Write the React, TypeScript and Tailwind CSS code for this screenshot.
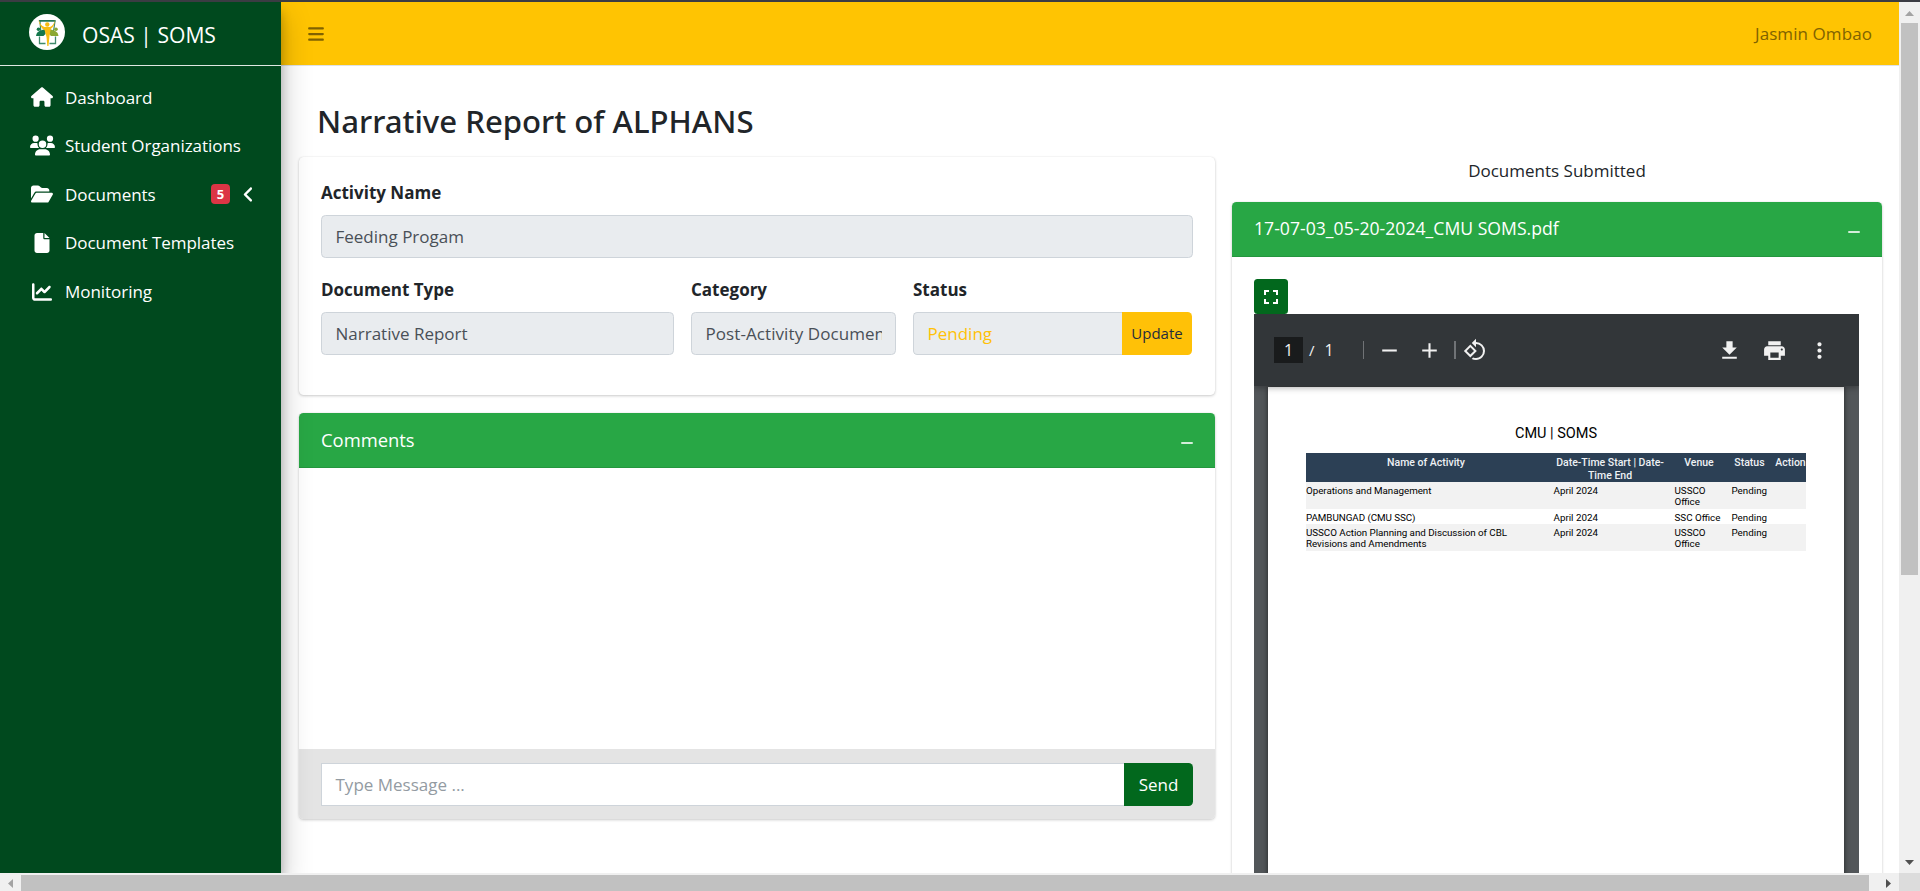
import type { ReactNode } from "react";
import { FaHouse, FaUsers, FaFolderOpen, FaFile, FaChartLine, FaAngleLeft, FaBars } from "react-icons/fa6";
import { MdAdd, MdRemove, MdPrint, MdMoreVert, MdRotate90DegreesCcw } from "react-icons/md";

function Logo() {
  return (
    <svg viewBox="0 0 36 36" className="size-9 shrink-0">
      <circle cx="18" cy="18" r="18" fill="#fff" />
      <path d="M11 7h15l-2 14M12 21l-1-14" fill="none" stroke="#3f8a6b" strokeWidth="1.200" />
      <path d="M10 6.800h16.500" stroke="#0d6b45" strokeWidth="1.300" />
      <circle cx="9.500" cy="15.300" r="1.800" fill="#14774c" />
      <path d="M7 22c.5-4 3-5 6-6l3.500-1v5l-2 2z" fill="#14774c" />
      <circle cx="27" cy="15.300" r="1.800" fill="#8aa832" />
      <path d="M29.500 22c-.5-4-3-5-6-6l-3-1-.5 5 2 2z" fill="#8aa832" />
      <path d="M10.500 22.500v7h6M26.500 22.500v7h-6" fill="none" stroke="#3f8a6b" strokeWidth="1.300" />
      <path d="M9.500 5.500c1.300 4 3 6.500 6 7.500h5.500c2.500-1 4.200-3.500 5-7.500-.2 5-1.800 8-4.300 9.500L20.500 22l-1 10h-1.200L17.500 23l-2-7c-3-1.500-5.500-5.500-6-10.500z" fill="#f7bd13" />
      <circle cx="18.300" cy="10.500" r="2.200" fill="#f7bd13" />
    </svg>
  );
}

function NavItem({ icon, label, children }: { icon: ReactNode; label: string; children?: ReactNode }) {
  return (
    <li className="flex h-[48.600px] items-center pr-[23px] pl-[30px] text-[17px] tracking-[-0.040px] text-white">
      <span className="mr-[11px] flex w-6 justify-center">{icon}</span>
      <span className="grow whitespace-nowrap">{label}</span>
      {children}
    </li>
  );
}

function Sidebar() {
  return (
    <aside className="relative z-20 flex w-[281px] shrink-0 flex-col bg-[#00491e] shadow-[0_14px_28px_rgba(0,0,0,0.25),0_10px_10px_rgba(0,0,0,0.22)]">
      <div className="flex h-16 items-center border-b border-[#dfe8e2] pr-4 pb-1 pl-[29px] text-[21.100px] text-white">
        <Logo />
        <span className="pt-1.5 pl-[17px] whitespace-nowrap">OSAS | SOMS</span>
      </div>
      <ul className="pt-[7px]">
        <NavItem icon={<FaHouse size={22} className="shrink-0" />} label="Dashboard" />
        <NavItem icon={<FaUsers size={25} className="shrink-0" />} label="Student Organizations" />
        <NavItem icon={<FaFolderOpen size={22} className="shrink-0" />} label="Documents">
          <span className="mr-[9px] flex h-5 w-[19px] items-center justify-center rounded bg-[#dc3545] text-[13px] font-bold">5</span>
          <FaAngleLeft size={19} />
        </NavItem>
        <NavItem icon={<FaFile size={20} />} label="Document Templates" />
        <NavItem icon={<FaChartLine size={20} />} label="Monitoring" />
      </ul>
    </aside>
  );
}

function Topbar() {
  return (
    <header className="flex h-16 shrink-0 items-center justify-between border-b border-[#dee2e6] bg-[#ffc402] pr-[27px] pl-[26px] text-[17px] text-[#806201]">
      <FaBars size={18} />
      <span className="tracking-[0.080px]">Jasmin Ombao</span>
    </header>
  );
}

function Card({ className, children }: { className: string; children: ReactNode }) {
  return (
    <section className={`rounded-[4.500px] bg-white shadow-[0_0_1px_rgba(0,0,0,0.125),0_1px_3px_rgba(0,0,0,0.2)] ${className}`}>
      {children}
    </section>
  );
}

function CardHeader({ title, size }: { title: string; size: string }) {
  return (
    <div className="flex h-[55px] shrink-0 items-center justify-between rounded-t-[4.500px] border-b border-[#24963e] bg-[#28a745] pr-[22px] pl-[22px] text-white">
      <h3 className={`pb-px ${size}`}>{title}</h3>
      <span className="mt-[5px] h-[2px] w-3 rounded-full bg-[#d4edda]" />
    </div>
  );
}

function Field({ label, className, children }: { label: string; className: string; children: ReactNode }) {
  return (
    <div className={className}>
      <label className="mb-[9px] block text-[17px] leading-[27px] font-bold text-[#212529]">{label}</label>
      {children}
    </div>
  );
}

function ReadOnly({ className, children }: { className: string; children: ReactNode }) {
  return (
    <div className={`flex h-[43px] items-center border border-[#ced4da] bg-[#e9ecef] px-[13.500px] pt-px text-[17px] ${className}`}>
      <div className="w-full overflow-hidden whitespace-nowrap">{children}</div>
    </div>
  );
}

function ActivityCard() {
  return (
    <Card className="h-[238px] px-[22px] pt-[22px]">
      <Field label="Activity Name" className="">
        <ReadOnly className="rounded-[4.500px] text-[#495057]">Feeding Progam</ReadOnly>
      </Field>
      <div className="mt-[18px] flex">
        <Field label="Document Type" className="mr-[17px] w-[353px]">
          <ReadOnly className="rounded-[4.500px] text-[#495057]">Narrative Report</ReadOnly>
        </Field>
        <Field label="Category" className="mr-[17px] w-[205px]">
          <ReadOnly className="rounded-[4.500px] tracking-[0.080px] text-[#495057]">Post-Activity Documents</ReadOnly>
        </Field>
        <Field label="Status" className="w-[279px]">
          <div className="flex">
            <ReadOnly className="w-[209px] rounded-l-[4.500px] border-r-0 text-[#ffc107]">Pending</ReadOnly>
            <button className="h-[43px] w-[70px] rounded-r-[4.500px] bg-[#ffc107] text-[15px] text-[#1f2d3d]">Update</button>
          </div>
        </Field>
      </div>
    </Card>
  );
}

function CommentsCard() {
  return (
    <Card className="mt-[18px] flex h-[406px] flex-col">
      <CardHeader title="Comments" size="text-[18.400px]" />
      <div className="grow" />
      <div className="flex h-[70px] items-start rounded-b-[4.500px] bg-[#e4e4e4] px-[22px] pt-3.5">
        <div className="flex h-[43px] grow items-center border border-r-0 border-[#ced4da] bg-white px-[13.500px] pt-px text-[17px] text-[#939ba2]">
          Type Message ...
        </div>
        <button className="h-[43px] w-[69px] rounded-r-[4.500px] bg-[#02681d] text-[17px] text-white">Send</button>
      </div>
    </Card>
  );
}

const rows = [
  { name: "Operations and Management", venue: "USSCO Office", style: "h-[27px] bg-[#f2f2f2]" },
  { name: "PAMBUNGAD (CMU SSC)", venue: "SSC Office", style: "h-[15px] bg-white" },
  { name: "USSCO Action Planning and Discussion of CBL Revisions and Amendments", venue: "USSCO Office", style: "h-[27px] bg-[#f2f2f2]" },
];

function PdfPage() {
  return (
    <div className="mt-px w-[576px] bg-white px-[38px] pt-[37px] font-[Roboto] text-black shadow-[0_0_5px_rgba(0,0,0,0.600)]">
      <p className="text-center text-[14.500px] leading-5">CMU | SOMS</p>
      <div className="mt-[9px] flex h-[29px] bg-[#2c4055] pt-[3px] text-center text-[10.500px] leading-[13px] font-medium whitespace-nowrap text-[#eef1f4]">
        <span className="w-[240px]">Name of Activity</span>
        <span className="w-[128px]">Date-Time Start | Date-<br />Time End</span>
        <span className="w-[50px]">Venue</span>
        <span className="w-[51px]">Status</span>
        <span className="w-[31px]">Action</span>
      </div>
      {rows.map((r) => (
        <div key={r.name} className={`flex pt-[3px] text-[9.800px] leading-[11.300px] ${r.style}`}>
          <span className="w-[247.500px] pr-8 tracking-[-0.040px]">{r.name}</span>
          <span className="w-[121px]">April 2024</span>
          <span className="w-[57px] pr-[6px]">{r.venue}</span>
          <span>Pending</span>
        </div>
      ))}
    </div>
  );
}

function PdfViewer() {
  return (
    <div className="flex grow flex-col overflow-hidden bg-[#525659]">
      <div className="relative z-10 flex h-[72px] shrink-0 items-center bg-[#323639] pr-[27px] pl-5 text-[#f1f1f1] shadow-[0_2px_6px_rgba(0,0,0,0.300)]">
        <span className="flex h-[26px] w-[29px] items-center justify-center bg-[#191b1c] text-[16px]">1</span>
        <span className="pl-[6px] text-[15px]">/</span>
        <span className="pl-[10px] text-[16px]">1</span>
        <span className="ml-[29px] h-[18px] w-px bg-[#707376]" />
        <MdRemove size={25} className="ml-[13px]" />
        <MdAdd size={25} className="ml-[15px]" />
        <span className="ml-[12px] h-[18px] w-[2px] bg-[#707376]" />
        <MdRotate90DegreesCcw size={24} className="ml-[7px]" />
        <span className="grow" />
        <svg viewBox="0 0 24 24" className="size-[25px]" fill="currentColor">
          <path d="M19 9h-4V3H9v6H5l7 7 7-7zM5 18v2h14v-2H5z" />
        </svg>
        <MdPrint size={25} className="ml-5" />
        <MdMoreVert size={25} className="ml-5" />
      </div>
      <div className="flex grow pl-[14px]">
        <PdfPage />
      </div>
    </div>
  );
}

function DocumentsColumn() {
  return (
    <div className="flex w-[650px] shrink-0 flex-col">
      <h5 className="pt-0.5 pb-[19px] text-center text-[17px] leading-6 text-[#212529]">Documents Submitted</h5>
      <Card className="-mb-5 flex grow flex-col">
        <CardHeader title="17-07-03_05-20-2024_CMU SOMS.pdf" size="text-[17.600px] tracking-[0.020px]" />
        <div className="flex grow flex-col pt-[22px] pr-[23px] pl-[22px]">
          <button className="flex h-[35px] w-[34px] shrink-0 items-center justify-center rounded-[3.500px] bg-[#02681d]">
            <svg viewBox="0 0 14 14" className="size-3.5" fill="none" stroke="#fff" strokeWidth="2">
              <path d="M1 5V1h4M9 1h4v4M13 9v4H9M5 13H1V9" />
            </svg>
          </button>
          <PdfViewer />
        </div>
      </Card>
    </div>
  );
}

function VerticalScrollbar() {
  return (
    <div className="flex w-[21px] shrink-0 flex-col items-center bg-[#f0f0f0]">
      <svg viewBox="0 0 21 21" className="size-[21px]" fill="#a3a3a3"><path d="M6 14h9l-4.500-5z" /></svg>
      <div className="h-[552px] w-[17px] bg-[#c1c1c1]" />
      <div className="grow" />
      <svg viewBox="0 0 21 21" className="size-[21px]" fill="#505050"><path d="M6 8h9l-4.500 5z" /></svg>
    </div>
  );
}

function HorizontalScrollbar() {
  return (
    <div className="flex h-[18px] shrink-0 bg-[#f0f0f0]">
      <svg viewBox="0 0 21 18" className="h-[18px] w-[21px]" fill="#a3a3a3"><path d="M13 6v9l-5-4.500z" /></svg>
      <div className="mt-[2px] h-4 w-[1848px] bg-[#c1c1c1]" />
      <div className="grow" />
      <svg viewBox="0 0 21 18" className="h-[18px] w-[21px]" fill="#505050"><path d="M8 6v9l5-4.500z" /></svg>
      <div className="w-[21px] bg-[#dcdcdc]" />
    </div>
  );
}

export default function App() {
  return (
    <div className="flex h-[891px] w-[1920px] flex-col overflow-hidden bg-white font-['Open_Sans',sans-serif]">
      <div className="h-[2px] shrink-0 bg-[#3b3c43]" />
      <div className="flex min-h-0 grow overflow-hidden">
        <Sidebar />
        <div className="flex min-w-0 grow flex-col">
          <Topbar />
          <main className="flex min-h-0 grow flex-col pl-[18px]">
            <h1 className="shrink-0 pt-[35px] pl-[18px] font-['Noto_Sans',sans-serif] text-[31.150px] leading-10 font-medium text-[#212529]">
              Narrative Report of ALPHANS
            </h1>
            <div className="mt-4 flex min-h-0 grow gap-[17px]">
              <div className="w-[916px] shrink-0">
                <ActivityCard />
                <CommentsCard />
              </div>
              <DocumentsColumn />
            </div>
          </main>
        </div>
        <VerticalScrollbar />
      </div>
      <HorizontalScrollbar />
    </div>
  );
}
